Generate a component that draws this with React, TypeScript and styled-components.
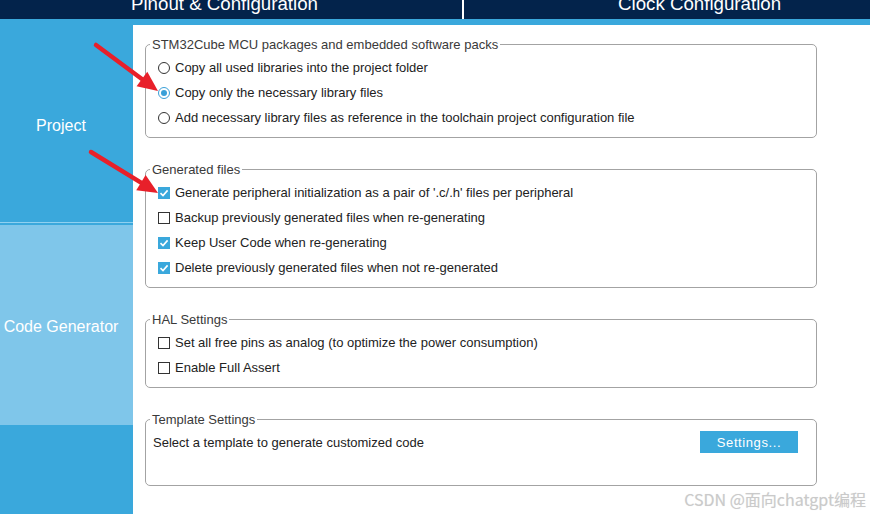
import React from "react";
import styled, { createGlobalStyle } from "styled-components";

const Global = createGlobalStyle`
  html, body { margin: 0; padding: 0; background: #fff; }
  body { font-family: "Liberation Sans", Arial, sans-serif; width: 870px; height: 514px; overflow: hidden; }
  * { box-sizing: border-box; }
`;

const Page = styled.div`
  position: relative;
  width: 870px;
  height: 514px;
  display: flex;
  flex-direction: column;
  overflow: hidden;
`;

const TopBar = styled.div`
  height: 19px;
  background: #03234b;
  display: flex;
  overflow: hidden;
`;

const Tab = styled.div<{ $w: number; $pl: number; $divider?: boolean }>`
  width: ${(p) => p.$w}px;
  padding-left: ${(p) => p.$pl}px;
  color: #fff;
  font-size: 18.7px;
  line-height: 20px;
  border-right: ${(p) => (p.$divider ? "2px solid #ffffff" : "none")};
  white-space: nowrap;
`;

const TabText = styled.span`
  display: block;
  margin-top: -6px;
`;

const Stripe = styled.div`
  height: 6px;
  background: #3aa8dc;
`;

const Body = styled.div`
  flex: 1;
  display: flex;
`;

const Sidebar = styled.div`
  width: 133px;
  background: #3aa8dc;
  display: flex;
  flex-direction: column;
`;

const NavItem = styled.div<{ $h: number; $active?: boolean }>`
  height: ${(p) => p.$h}px;
  background: ${(p) => (p.$active ? "#7fc6ea" : "#3aa8dc")};
  color: #fff;
  font-size: 16px;
  display: flex;
  align-items: center;
  justify-content: center;
  padding: 4px 11px 0 0;
  white-space: nowrap;
`;

const NavSep = styled.div`
  height: 1px;
  background: #8fd0f0;
  margin-bottom: 2px;
`;

const Main = styled.div`
  flex: 1;
  padding: 12px 53px 0 12px;
  display: flex;
  flex-direction: column;
  gap: 24px;
`;

const Group = styled.fieldset<{ $pb?: number }>`
  margin: 0;
  border: 1px solid #a3a3a3;
  border-radius: 5px;
  padding: 3px 0 ${(p) => p.$pb ?? 7}px 12px;
  min-width: 0;
`;

const Legend = styled.legend`
  font-size: 13px;
  line-height: 15px;
  color: #3a3a3a;
  padding: 0 2px;
  margin-left: -8px;
`;

const Row = styled.label`
  height: 25px;
  display: flex;
  align-items: center;
  gap: 5px;
  font-size: 13px;
  color: #222;
  white-space: nowrap;
`;

const Radio = styled.span<{ $on?: boolean }>`
  width: 12px;
  height: 12px;
  border-radius: 50%;
  border: 1px solid ${(p) => (p.$on ? "#3aa0d8" : "#333")};
  background: #fff;
  display: flex;
  align-items: center;
  justify-content: center;
  flex: none;
  &::after {
    content: "";
    width: 6px;
    height: 6px;
    border-radius: 50%;
    background: ${(p) => (p.$on ? "#3aa0d8" : "transparent")};
  }
`;

const Box = styled.span<{ $on?: boolean }>`
  width: 12px;
  height: 12px;
  border: 1px solid ${(p) => (p.$on ? "#3aa8dc" : "#333")};
  background: ${(p) => (p.$on ? "#3aa8dc" : "#fff")};
  display: flex;
  align-items: center;
  justify-content: center;
  flex: none;
`;

const TemplateRow = styled.div`
  display: flex;
  align-items: center;
  justify-content: space-between;
  margin-left: -5px;
  padding-right: 18px;
  padding-top: 1px;
  font-size: 13px;
  color: #222;
`;

const Button = styled.button`
  width: 98px;
  height: 22px;
  border: none;
  background: #3aa8dc;
  color: #fff;
  font-family: "Liberation Sans", Arial, sans-serif;
  font-size: 13px;
  letter-spacing: 0.6px;
  padding: 0;
`;

const Arrows = styled.svg`
  position: absolute;
  left: 0;
  top: 0;
  pointer-events: none;
`;

const Watermark = styled.div`
  position: absolute;
  right: 4px;
  bottom: 6px;
  font-family: "Noto Sans CJK SC", "Liberation Sans", sans-serif;
  font-size: 16px;
  line-height: 18px;
  color: #cacaca;
  text-shadow: 0 0 1px #e6e6e6;
`;

const Check = () => (
  <svg width="10" height="10" viewBox="0 0 10 10">
    <path d="M1.5 5.2 L4 7.6 L8.6 2.4" stroke="#fff" strokeWidth="1.6" fill="none" />
  </svg>
);

const CheckBox = ({ on }: { on?: boolean }) => <Box $on={on}>{on && <Check />}</Box>;

const Arrow = ({ x1, y1, x2, y2 }: { x1: number; y1: number; x2: number; y2: number }) => {
  const dx = x2 - x1;
  const dy = y2 - y1;
  const len = Math.hypot(dx, dy);
  const ux = dx / len;
  const uy = dy / len;
  const hl = 20;
  const hw = 9;
  const bx = x2 - ux * hl;
  const by = y2 - uy * hl;
  const px = -uy;
  const py = ux;
  return (
    <g>
      <line x1={x1} y1={y1} x2={bx + ux * 2} y2={by + uy * 2} stroke="#e8202a" strokeWidth="4.5" strokeLinecap="round" />
      <polygon
        points={`${x2},${y2} ${bx + px * hw},${by + py * hw} ${bx - px * hw},${by - py * hw}`}
        fill="#e8202a"
      />
    </g>
  );
};

export default function App() {
  return (
    <>
      <Global />
      <Page>
        <TopBar>
          <Tab $w={464} $pl={131} $divider>
            <TabText>Pinout &amp; Configuration</TabText>
          </Tab>
          <Tab $w={406} $pl={154}>
            <TabText>Clock Configuration</TabText>
          </Tab>
        </TopBar>
        <Stripe />
        <Body>
          <Sidebar>
            <NavItem $h={197}>Project</NavItem>
            <NavSep />
            <NavItem $h={200} $active>
              Code Generator
            </NavItem>
          </Sidebar>
          <Main>
            <Group>
              <Legend>STM32Cube MCU packages and embedded software packs</Legend>
              <Row>
                <Radio />
                Copy all used libraries into the project folder
              </Row>
              <Row>
                <Radio $on />
                Copy only the necessary library files
              </Row>
              <Row>
                <Radio />
                Add necessary library files as reference in the toolchain project configuration file
              </Row>
            </Group>
            <Group>
              <Legend>Generated files</Legend>
              <Row>
                <CheckBox on />
                Generate peripheral initialization as a pair of '.c/.h' files per peripheral
              </Row>
              <Row>
                <CheckBox />
                Backup previously generated files when re-generating
              </Row>
              <Row>
                <CheckBox on />
                Keep User Code when re-generating
              </Row>
              <Row>
                <CheckBox on />
                Delete previously generated files when not re-generated
              </Row>
            </Group>
            <Group>
              <Legend>HAL Settings</Legend>
              <Row>
                <CheckBox />
                Set all free pins as analog (to optimize the power consumption)
              </Row>
              <Row>
                <CheckBox />
                Enable Full Assert
              </Row>
            </Group>
            <Group $pb={32}>
              <Legend>Template Settings</Legend>
              <TemplateRow>
                Select a template to generate customized code
                <Button>Settings...</Button>
              </TemplateRow>
            </Group>
          </Main>
        </Body>
        <Arrows width="870" height="514">
          <Arrow x1={96} y1={45} x2={158} y2={91} />
          <Arrow x1={91} y1={152} x2={158} y2={193} />
        </Arrows>
        <Watermark>CSDN @面向chatgpt编程</Watermark>
      </Page>
    </>
  );
}
